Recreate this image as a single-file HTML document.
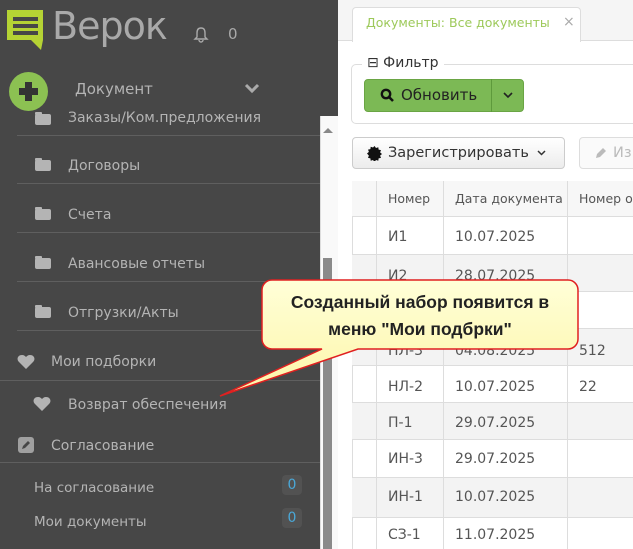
<!DOCTYPE html>
<html><head><meta charset="utf-8"><style>
*{margin:0;padding:0;box-sizing:border-box}
body{width:633px;height:549px;overflow:hidden;position:relative;background:#fff;font-family:"DejaVu Sans","Liberation Sans",sans-serif;}
.a{position:absolute}
#side{left:0;top:0;width:338px;height:549px;background:#474747}
.sb{color:#b4b4b4;font-size:14px}
.sep{position:absolute;left:17px;width:303px;height:1px;background:#5f5f5f}
.fold{position:absolute;left:35px;width:16px;height:11px;background:#b4b4b4;border-radius:2px}
.fold:before{content:"";position:absolute;left:0;top:-2px;width:7px;height:3px;background:#b4b4b4;border-radius:1px}
.cell{position:absolute;font-size:14px;color:#555}
.vl{position:absolute;top:181px;bottom:0;width:1px;background:#ddd}
</style></head><body>
<div id="side" class="a"></div>
<svg class="a" style="left:7px;top:10px" width="38" height="40" viewBox="0 0 38 40">
<polygon points="0,0 36,0 36,30 34,40 24,30 0,30" fill="#b5d334"/>
<rect x="6" y="7" width="25" height="4" fill="#474747"/><rect x="6" y="14" width="25" height="4" fill="#474747"/><rect x="6" y="21" width="25" height="4" fill="#474747"/>
</svg>
<div class="a" style="left:52px;top:4px;font-size:38px;color:#a9a9a9;font-family:'DejaVu Sans',sans-serif;letter-spacing:-1px">Верок</div>
<svg class="a" style="left:193px;top:26px" width="16" height="17" viewBox="0 0 16 17"><path d="M8 2C5 2 4 4 4 7v4l-2 2h12l-2-2V7c0-3-1-5-4-5zM6 14a2 2 0 004 0" fill="none" stroke="#aaa" stroke-width="1.4"/></svg>
<div class="a sb" style="left:228px;top:25px;font-size:15px;color:#aaa">0</div>
<div class="a" style="left:9px;top:72px;width:39px;height:39px;border-radius:50%;background:#8cc152"></div>
<div class="a" style="left:19px;top:88px;width:19px;height:7px;background:#333"></div>
<div class="a" style="left:25px;top:82px;width:7px;height:19px;background:#333"></div>
<div class="a sb" style="left:75px;top:80px;font-size:15px">Документ</div>
<svg class="a" style="left:244px;top:83px" width="16" height="11"><path d="M2 2l6 6 6-6" fill="none" stroke="#aaa" stroke-width="3"/></svg>
<div class="fold" style="top:114px"></div><div class="a sb" style="left:68px;top:110px">Заказы/Ком.предложения</div>
<div class="sep" style="top:135px"></div>
<div class="fold" style="top:160px"></div><div class="a sb" style="left:68px;top:158px">Договоры</div>
<div class="sep" style="top:183px"></div>
<div class="fold" style="top:209px"></div><div class="a sb" style="left:68px;top:207px">Счета</div>
<div class="sep" style="top:232px"></div>
<div class="fold" style="top:258px"></div><div class="a sb" style="left:68px;top:256px">Авансовые отчеты</div>
<div class="sep" style="top:281px"></div>
<div class="fold" style="top:307px"></div><div class="a sb" style="left:68px;top:305px">Отгрузки/Акты</div>
<div class="sep" style="top:330px"></div>
<svg class="a" style="left:17px;top:354px" width="18" height="16" viewBox="0 0 18 16"><path d="M9 15L2 8C-1 5 1 1 5 1c2 0 3 1 4 2 1-1 2-2 4-2 4 0 6 4 3 7z" fill="#b4b4b4"/></svg>
<div class="a sb" style="left:51px;top:354px">Мои подборки</div>
<div class="a" style="left:0;top:380px;width:320px;height:1px;background:#5f5f5f"></div>
<svg class="a" style="left:33px;top:396px" width="18" height="16" viewBox="0 0 18 16"><path d="M9 15L2 8C-1 5 1 1 5 1c2 0 3 1 4 2 1-1 2-2 4-2 4 0 6 4 3 7z" fill="#b4b4b4"/></svg>
<div class="a sb" style="left:68px;top:397px">Возврат обеспечения</div>
<div class="a" style="left:18px;top:437px;width:16px;height:16px;background:#a0a0a0;border-radius:3px"></div>
<svg class="a" style="left:18px;top:437px" width="16" height="16"><path d="M4 12l1-3 5-5 2 2-5 5z" fill="#474747"/></svg>
<div class="a sb" style="left:51px;top:438px">Согласование</div>
<div class="a" style="left:0;top:462px;width:320px;height:1px;background:#5f5f5f"></div>
<div class="a sb" style="left:34px;top:480px;font-size:13.5px">На согласование</div>
<div class="a" style="left:282px;top:475px;width:20px;height:20px;background:#525252;border-radius:4px;color:#4aa8d8;font-size:14px;text-align:center;line-height:20px">0</div>
<div class="a sb" style="left:34px;top:514px;font-size:13.5px">Мои документы</div>
<div class="a" style="left:282px;top:508px;width:20px;height:20px;background:#525252;border-radius:4px;color:#4aa8d8;font-size:14px;text-align:center;line-height:20px">0</div>
<div class="a" style="left:320px;top:116px;width:18px;height:433px;background:#f9f9f9;border-left:1px solid #ddd"></div>
<div class="a" style="left:323px;top:128px;width:0;height:0;border-left:5px solid transparent;border-right:5px solid transparent;border-bottom:5px solid #888"></div>
<div class="a" style="left:323px;top:258px;width:9px;height:291px;background:#8a8a8a"></div>
<div class="a" style="left:338px;top:0;width:295px;height:41px;background:#f5f5f5;border-bottom:1px solid #ddd"></div>
<div class="a" style="left:352px;top:7px;width:229px;height:35px;background:#fff;border:1px solid #ddd;border-bottom:none;border-radius:4px 4px 0 0"></div>
<div class="a" style="left:366px;top:15px;font-size:12.5px;color:#9dc95a">Документы: Все документы</div>
<div class="a" style="left:563px;top:14px;font-size:14px;color:#aaa">×</div>
<div class="a" style="left:351px;top:64px;width:290px;height:60px;border:1px solid #ddd;border-radius:5px"></div>
<div class="a" style="left:362px;top:55px;background:#fff;padding:0 5px;font-size:14px;color:#333">⊟ Фильтр</div>
<div class="a" style="left:364px;top:79px;width:160px;height:33px;background:#7cb955;border:1px solid #6aa544;border-radius:4px"></div>
<div class="a" style="left:491px;top:79px;width:1px;height:33px;background:#5e9a3c"></div>
<svg class="a" style="left:380px;top:88px" width="14" height="14"><circle cx="6" cy="6" r="4.2" fill="none" stroke="#111" stroke-width="2.4"/><path d="M9 9l4 4" stroke="#111" stroke-width="2.6"/></svg>
<div class="a" style="left:401px;top:86px;font-size:15px;color:#222">Обновить</div>
<svg class="a" style="left:502px;top:91px" width="12" height="8"><path d="M2 2l4 4 4-4" fill="none" stroke="#222" stroke-width="1.6"/></svg>
<div class="a" style="left:352px;top:137px;width:213px;height:32px;background:linear-gradient(#fff,#ececec);border:1px solid #ccc;border-radius:4px"></div>
<svg class="a" style="left:367px;top:146px" width="15" height="15" viewBox="0 0 15 15"><path d="M7.5 0l1.5 2 2.3-.8.3 2.4 2.4.5-.9 2.3 1.9 1.6-1.9 1.6.9 2.3-2.4.5-.3 2.4-2.3-.8-1.5 2-1.5-2-2.3.8-.3-2.4-2.4-.5.9-2.3L0 7.5l1.9-1.6-.9-2.3 2.4-.5.3-2.4 2.3.8z" fill="#111"/></svg>
<div class="a" style="left:388px;top:145px;font-size:14.5px;color:#333">Зарегистрировать</div>
<svg class="a" style="left:536px;top:149px" width="11" height="8"><path d="M2 2l3.5 3.5L9 2" fill="none" stroke="#333" stroke-width="1.5"/></svg>
<div class="a" style="left:579px;top:137px;width:60px;height:32px;background:#fafafa;border:1px solid #ddd;border-radius:4px"></div>
<svg class="a" style="left:594px;top:146px" width="14" height="14"><path d="M2 12l1-4 6-6 3 3-6 6z" fill="#bbb"/></svg>
<div class="a" style="left:613px;top:145px;font-size:14.5px;color:#bbb">Из</div>
<div class="a" style="left:352px;top:181px;width:290px;height:368px;border-left:1px solid #ddd;border-top:1px solid #ddd"></div>
<div class="a" style="left:352px;top:181px;width:290px;height:36px;background:#f7f7f7;border-bottom:1px solid #ddd"></div>
<div class="a" style="left:352px;top:254px;width:290px;height:37px;background:#f3f3f3"></div>
<div class="a" style="left:352px;top:328px;width:290px;height:37px;background:#f3f3f3"></div>
<div class="a" style="left:352px;top:402px;width:290px;height:37px;background:#f3f3f3"></div>
<div class="a" style="left:352px;top:477px;width:290px;height:40px;background:#f3f3f3"></div>
<div class="a" style="left:352px;top:254px;width:290px;height:1px;background:#ddd"></div>
<div class="a" style="left:352px;top:291px;width:290px;height:1px;background:#ddd"></div>
<div class="a" style="left:352px;top:328px;width:290px;height:1px;background:#ddd"></div>
<div class="a" style="left:352px;top:365px;width:290px;height:1px;background:#ddd"></div>
<div class="a" style="left:352px;top:402px;width:290px;height:1px;background:#ddd"></div>
<div class="a" style="left:352px;top:439px;width:290px;height:1px;background:#ddd"></div>
<div class="a" style="left:352px;top:477px;width:290px;height:1px;background:#ddd"></div>
<div class="a" style="left:352px;top:517px;width:290px;height:1px;background:#ddd"></div>
<div class="vl" style="left:376px"></div><div class="vl" style="left:443px"></div><div class="vl" style="left:567px"></div>
<div class="cell" style="left:388px;top:191px;font-size:12.5px">Номер</div>
<div class="cell" style="left:455px;top:191px;font-size:12.5px">Дата документа</div>
<div class="cell" style="left:579px;top:191px;font-size:12.5px">Номер о</div>
<div class="cell" style="left:388px;top:229px">И1</div><div class="cell" style="left:455px;top:229px">10.07.2025</div>
<div class="cell" style="left:388px;top:268px">И2</div><div class="cell" style="left:455px;top:268px">28.07.2025</div>
<div class="cell" style="left:388px;top:343px">НЛ-3</div><div class="cell" style="left:455px;top:343px">04.08.2025</div><div class="cell" style="left:579px;top:343px">512</div>
<div class="cell" style="left:388px;top:379px">НЛ-2</div><div class="cell" style="left:455px;top:379px">10.07.2025</div><div class="cell" style="left:579px;top:379px">22</div>
<div class="cell" style="left:388px;top:415px">П-1</div><div class="cell" style="left:455px;top:415px">29.07.2025</div>
<div class="cell" style="left:388px;top:451px">ИН-3</div><div class="cell" style="left:455px;top:451px">29.07.2025</div>
<div class="cell" style="left:388px;top:489px">ИН-1</div><div class="cell" style="left:455px;top:489px">10.07.2025</div>
<div class="cell" style="left:388px;top:527px">СЗ-1</div><div class="cell" style="left:455px;top:527px">11.07.2025</div>
<svg class="a" style="left:0;top:0" width="633" height="549">
<defs><linearGradient id="g" x1="0" y1="0" x2="0" y2="1"><stop offset="0" stop-color="#ffffd8"/><stop offset="1" stop-color="#fdf5a8"/></linearGradient></defs>
<path d="M272 280H568a10 10 0 0 1 10 10V339a10 10 0 0 1-10 10H358L220 396 322 349H272a10 10 0 0 1-10-10V290a10 10 0 0 1 10-10z" fill="url(#g)" stroke="#e02020" stroke-width="1.5"/>
<text x="420" y="308" text-anchor="middle" font-family="Liberation Sans, sans-serif" font-weight="bold" font-size="17.5" fill="#222">Созданный набор появится в</text>
<text x="420" y="335" text-anchor="middle" font-family="Liberation Sans, sans-serif" font-weight="bold" font-size="17.5" fill="#222">меню "Мои подбрки"</text>
</svg>
</body></html>
